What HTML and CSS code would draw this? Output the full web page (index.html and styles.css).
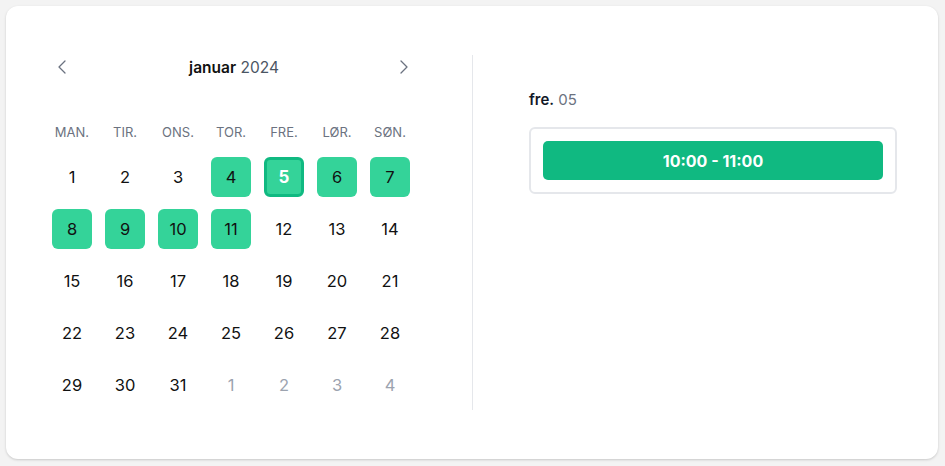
FILE: index.html
```html
<!DOCTYPE html>
<html lang="no">
<head>
<meta charset="utf-8">
<link rel="stylesheet" href="styles.css">
</head>
<body>
<div class="card">
  <section class="calendar">
    <div class="cal-head">
      <button class="nav" aria-label="Forrige måned">
        <svg width="8" height="14" viewBox="0 0 8 14"><path d="M7 1 1 7l6 6" fill="none" stroke="currentColor" stroke-width="1.3" stroke-linecap="round" stroke-linejoin="round"/></svg>
      </button>
      <div class="month"><b>januar</b> <span>2024</span></div>
      <button class="nav" aria-label="Neste måned">
        <svg width="8" height="14" viewBox="0 0 8 14"><path d="M1 1l6 6-6 6" fill="none" stroke="currentColor" stroke-width="1.3" stroke-linecap="round" stroke-linejoin="round"/></svg>
      </button>
    </div>
    <div class="weekdays">
      <div>MAN.</div><div>TIR.</div><div>ONS.</div><div>TOR.</div><div>FRE.</div><div>LØR.</div><div>SØN.</div>
    </div>
    <div class="days">
      <div class="day">1</div><div class="day">2</div><div class="day">3</div><div class="day avail">4</div><div class="day avail sel">5</div><div class="day avail">6</div><div class="day avail">7</div>
      <div class="day avail">8</div><div class="day avail">9</div><div class="day avail">10</div><div class="day avail">11</div><div class="day">12</div><div class="day">13</div><div class="day">14</div>
      <div class="day">15</div><div class="day">16</div><div class="day">17</div><div class="day">18</div><div class="day">19</div><div class="day">20</div><div class="day">21</div>
      <div class="day">22</div><div class="day">23</div><div class="day">24</div><div class="day">25</div><div class="day">26</div><div class="day">27</div><div class="day">28</div>
      <div class="day">29</div><div class="day">30</div><div class="day">31</div><div class="day out">1</div><div class="day out">2</div><div class="day out">3</div><div class="day out">4</div>
    </div>
  </section>
  <section class="slots">
    <div class="slot-date"><b>fre.</b> <span>05</span></div>
    <div class="slot-box">
      <button class="slot">10:00 - 11:00</button>
    </div>
  </section>
</div>
</body>
</html>
```
FILE: styles.css
```css
* { box-sizing: border-box; }
html, body { margin: 0; padding: 0; }
body {
  background: #f3f3f3;
  font-family: Inter, "Noto Sans", sans-serif;
  color: #111827;
  width: 945px;
  height: 466px;
  padding: 6px 7px 7px 6px;
}
.card {
  background: #fff;
  border-radius: 12px;
  box-shadow: 0 1px 3px rgba(0,0,0,0.12), 0 1px 2px rgba(0,0,0,0.06);
  height: 453px;
  display: flex;
  padding: 49px 41px 49px 46px;
}
.calendar {
  width: 358px;
  margin-right: 62px;
  flex: none;
}
.cal-head {
  display: flex;
  align-items: center;
  justify-content: space-between;
  height: 24px;
  padding: 0 2px 0 6px;
}
.nav {
  border: 0;
  background: none;
  padding: 0;
  width: 8px;
  height: 14px;
  color: #6b7280;
  display: flex;
}
.month {
  font-size: 15.5px;
  color: #111;
  padding-left: 2px;
}
.month b { font-weight: 600; }
.month span { color: #4b5563; font-weight: 400; }
.weekdays {
  display: grid;
  grid-template-columns: repeat(7, 40px);
  column-gap: 13px;
  margin-top: 45px;
  font-size: 13px;
  color: #6b7280;
  text-align: center;
  line-height: 16px;
}
.days {
  display: grid;
  grid-template-columns: repeat(7, 40px);
  grid-auto-rows: 40px;
  column-gap: 13px;
  row-gap: 12px;
  margin-top: 17px;
}
.day {
  display: flex;
  align-items: center;
  justify-content: center;
  font-size: 16.5px;
  color: #111;
  border-radius: 6px;
}
.day.avail { background: #34d399; }
.day.sel {
  border: 3px solid #10b981;
  color: #fff;
  font-weight: 700;
  font-size: 17px;
}
.day.out { color: #9ca3af; }
.slots {
  flex: 1;
  border-left: 1px solid #e5e7eb;
  padding: 36px 0 0 56px;
}
.slot-date {
  font-size: 15px;
  line-height: 18px;
}
.slot-date b { font-weight: 600; }
.slot-date span { color: #6b7280; }
.slot-box {
  margin-top: 18px;
  border: 2px solid #e5e7eb;
  border-radius: 6px;
  padding: 12px;
}
.slot {
  display: block;
  width: 100%;
  height: 39px;
  border: 0;
  border-radius: 5px;
  background: #10b981;
  color: #fff;
  font-family: inherit;
  font-size: 16px;
  font-weight: 700;
}
```
